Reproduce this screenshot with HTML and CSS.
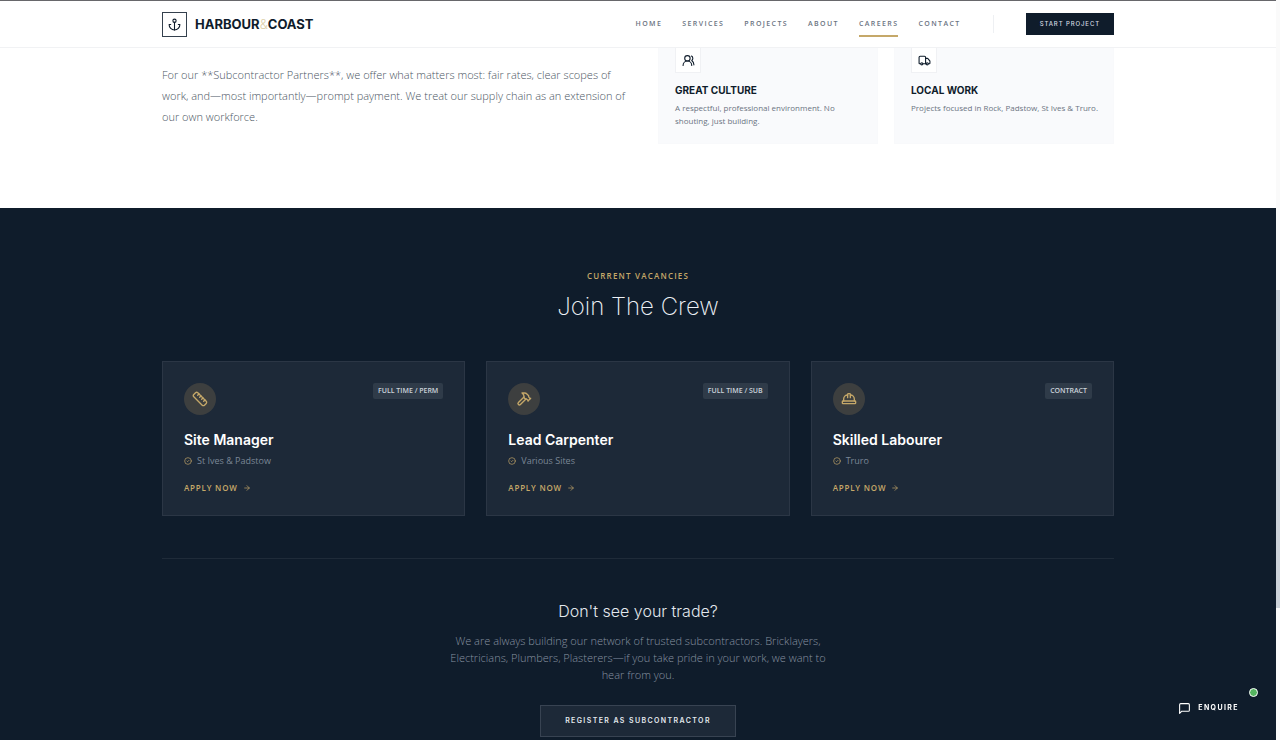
FILE: index.html
```html
<!DOCTYPE html>
<html lang="en">
<head>
<meta charset="utf-8">
<meta name="viewport" content="width=device-width, initial-scale=1">
<title>Careers | Harbour&amp;Coast</title>
<link rel="stylesheet" href="styles.css">
</head>
<body>
<svg class="sprite" aria-hidden="true">
  <symbol id="pin" viewBox="0 0 24 24"><circle cx="12" cy="12" r="10"/><path d="m9 12 2 2 4-4"/></symbol>
  <symbol id="arrow" viewBox="0 0 24 24"><path d="M5 12h14"/><path d="m12 5 7 7-7 7"/></symbol>
</svg>

<header class="site-header">
  <div class="container header-row">
    <a class="brand" href="#">
      <span class="brand-mark"><svg class="icon icon-md" viewBox="0 0 24 24"><path d="M12 22V8"/><path d="M5 12H2a10 10 0 0 0 20 0h-3"/><circle cx="12" cy="5" r="3"/></svg></span>
      <span class="brand-name">HARBOUR<span class="amp">&amp;</span>COAST</span>
    </a>
    <div class="header-right">
      <nav class="nav" aria-label="Main">
        <a href="#">HOME</a>
        <a href="#">SERVICES</a>
        <a href="#">PROJECTS</a>
        <a href="#">ABOUT</a>
        <a class="active" href="#" aria-current="page">CAREERS</a>
        <a href="#">CONTACT</a>
      </nav>
      <span class="divider"></span>
      <a class="start" href="#">START PROJECT</a>
    </div>
  </div>
</header>

<main class="page">
  <section class="intro">
    <div class="container intro-grid">
      <p class="intro-text">For our **Subcontractor Partners**, we offer what matters most: fair rates, clear scopes of work, and—most importantly—prompt payment. We treat our supply chain as an extension of our own workforce.</p>
      <div class="perks">
        <article class="perk">
          <span class="perk-icon"><svg class="icon icon-md" viewBox="0 0 24 24"><path d="M18 21a8 8 0 0 0-16 0"/><circle cx="10" cy="8" r="5"/><path d="M22 20c0-3.370-2-6.500-4-8a5 5 0 0 0-.45-8.300"/></svg></span>
          <h3>GREAT CULTURE</h3>
          <p>A respectful, professional environment. No shouting, just building.</p>
        </article>
        <article class="perk">
          <span class="perk-icon"><svg class="icon icon-md" viewBox="0 0 24 24"><path d="M14 18V6a2 2 0 0 0-2-2H4a2 2 0 0 0-2 2v11a1 1 0 0 0 1 1h2"/><path d="M15 18H9"/><path d="M19 18h2a1 1 0 0 0 1-1v-3.650a1 1 0 0 0-.22-.624l-3.480-4.350A1 1 0 0 0 17.520 8H14"/><circle cx="17" cy="18" r="2"/><circle cx="7" cy="18" r="2"/></svg></span>
          <h3>LOCAL WORK</h3>
          <p>Projects focused in Rock, Padstow, St Ives &amp; Truro.</p>
        </article>
      </div>
    </div>
  </section>

  <section class="vacancies">
    <div class="container">
      <p class="eyebrow">CURRENT VACANCIES</p>
      <h2>Join The Crew</h2>
      <div class="jobs">
        <article class="job">
          <div class="job-top">
            <span class="job-icon"><svg class="icon icon-lg" viewBox="0 0 24 24"><path d="M21.300 15.300a2.400 2.400 0 0 1 0 3.400l-2.600 2.600a2.400 2.400 0 0 1-3.400 0L2.700 8.700a2.410 2.410 0 0 1 0-3.400l2.600-2.600a2.410 2.410 0 0 1 3.400 0Z"/><path d="m14.500 12.500 2-2"/><path d="m11.500 9.500 2-2"/><path d="m8.500 6.500 2-2"/><path d="m17.500 15.500 2-2"/></svg></span>
            <span class="tag">FULL TIME / PERM</span>
          </div>
          <h3>Site Manager</h3>
          <p class="place"><svg class="icon icon-xs"><use href="#pin"/></svg>St Ives &amp; Padstow</p>
          <a class="apply" href="#">APPLY NOW<svg class="icon icon-xs"><use href="#arrow"/></svg></a>
        </article>
        <article class="job">
          <div class="job-top">
            <span class="job-icon"><svg class="icon icon-lg" viewBox="0 0 24 24"><path d="m15 12-8.373 8.373a1 1 0 1 1-3-3L12 9"/><path d="m18 15 4-4"/><path d="m21.500 11.500-1.914-1.914A2 2 0 0 1 19 8.172V7l-2.260-2.260a6 6 0 0 0-4.202-1.756L9 2.960l.92.820A6.180 6.180 0 0 1 12 8.400V10l2 2h1.172a2 2 0 0 1 1.414.586L18.500 14.500"/></svg></span>
            <span class="tag">FULL TIME / SUB</span>
          </div>
          <h3>Lead Carpenter</h3>
          <p class="place"><svg class="icon icon-xs"><use href="#pin"/></svg>Various Sites</p>
          <a class="apply" href="#">APPLY NOW<svg class="icon icon-xs"><use href="#arrow"/></svg></a>
        </article>
        <article class="job">
          <div class="job-top">
            <span class="job-icon"><svg class="icon icon-lg" viewBox="0 0 24 24"><path d="M2 18a1 1 0 0 0 1 1h18a1 1 0 0 0 1-1v-2a1 1 0 0 0-1-1H3a1 1 0 0 0-1 1v2z"/><path d="M10 10V5a1 1 0 0 1 1-1h2a1 1 0 0 1 1 1v5"/><path d="M4 15v-3a6 6 0 0 1 6-6"/><path d="M14 6a6 6 0 0 1 6 6v3"/></svg></span>
            <span class="tag">CONTRACT</span>
          </div>
          <h3>Skilled Labourer</h3>
          <p class="place"><svg class="icon icon-xs"><use href="#pin"/></svg>Truro</p>
          <a class="apply" href="#">APPLY NOW<svg class="icon icon-xs"><use href="#arrow"/></svg></a>
        </article>
      </div>
      <div class="trade">
        <h3>Don't see your trade?</h3>
        <p>We are always building our network of trusted subcontractors. Bricklayers, Electricians, Plumbers, Plasterers—if you take pride in your work, we want to hear from you.</p>
        <a class="register" href="#">REGISTER AS SUBCONTRACTOR</a>
      </div>
    </div>
  </section>
</main>

<button class="enquire" type="button">
  <svg class="icon icon-md" viewBox="0 0 24 24"><path d="M21 15a2 2 0 0 1-2 2H7l-4 4V5a2 2 0 0 1 2-2h14a2 2 0 0 1 2 2z"/></svg>
  ENQUIRE
  <span class="online"></span>
</button>
<div class="scroll-track" aria-hidden="true"><div class="scroll-thumb"></div></div>
</body>
</html>
```

FILE: styles.css
```css
:root {
  --navy: #0f1c2b;
  --panel: #1d2938;
  --gold: #c5a869;
  --head: Inter, "Open Sans", sans-serif;
  --text: "Open Sans", "Noto Sans", sans-serif;
}

* { box-sizing: border-box; margin: 0; padding: 0; }

body {
  min-height: 100vh;
  padding-right: 4px;
  background: #fff;
  color: var(--navy);
  font-family: var(--text);
  display: flex;
  flex-direction: column;
}

a { color: inherit; text-decoration: none; }

.sprite { position: absolute; width: 0; height: 0; }

.icon {
  flex: none;
  fill: none;
  stroke: currentColor;
  stroke-width: 2;
  stroke-linecap: round;
  stroke-linejoin: round;
}
.icon-xs { width: 8px; height: 8px; }
.icon-md { width: 13px; height: 13px; }
.icon-lg { width: 16px; height: 16px; }

.container { width: 100%; max-width: 952px; margin: 0 auto; }

/* Header */
.site-header {
  position: fixed;
  inset: 0 4px auto 0;
  z-index: 2;
  height: 48px;
  background: #fff;
  border-top: 1px solid #67676b;
  border-bottom: 1px solid #f1f2f4;
}
.header-row {
  height: 100%;
  display: flex;
  align-items: center;
  justify-content: space-between;
}
.brand { display: flex; align-items: center; gap: 8px; }
.brand-mark {
  width: 25px;
  height: 25px;
  border: 1px solid #34404d;
  display: grid;
  place-items: center;
}
.brand-name { font: 700 13px/16px var(--head); }
.amp { color: #ddd0a8; font-weight: 300; }
.header-right { display: flex; align-items: center; }
.nav { display: flex; gap: 20px; }
.nav a {
  padding: 6px 0 4px;
  border-bottom: 2px solid transparent;
  font-size: 7px;
  line-height: 14px;
  font-weight: 600;
  letter-spacing: 0.2em;
  color: #6b7482;
}
.nav .active { border-color: var(--gold); }
.divider { width: 1px; height: 18px; margin: 0 32px; background: #eef0f3; }
.start {
  padding: 0 14px;
  background: var(--navy);
  color: #d5dae0;
  font: 500 6px/22px var(--head);
  letter-spacing: 0.15em;
}

/* Intro */
.intro { padding: 29px 0 64px; }
.intro-grid {
  display: grid;
  grid-template-columns: 470fr 456fr;
  gap: 26px;
}
.intro-text {
  padding-top: 35px;
  font-size: 11px;
  line-height: 21px;
  font-weight: 300;
  color: #4b5563;
}
.perks { display: grid; grid-template-columns: 1fr 1fr; gap: 16px; }
.perk {
  padding: 17px 12px 16px 16px;
  background: #f9fafc;
  border: 1px solid #f8f9fb;
}
.perk-icon {
  width: 26px;
  height: 26px;
  background: #fff;
  border: 1px solid #f0f1f4;
  display: grid;
  place-items: center;
}
.perk h3 { margin-top: 10px; font: 700 10px/14px var(--head); }
.perk p {
  margin-top: 4px;
  font-size: 8px;
  line-height: 13px;
  color: #6b7482;
}

/* Vacancies */
.page { flex: 1; display: flex; flex-direction: column; }
.vacancies { flex: 1; padding: 61px 0 3px; background: var(--navy); }
.eyebrow {
  text-align: center;
  font-size: 8px;
  line-height: 14px;
  font-weight: 600;
  letter-spacing: 0.15em;
  color: var(--gold);
}
.vacancies h2 {
  margin-top: 8px;
  text-align: center;
  font: 200 24px/32px var(--head);
  color: #eef2f7;
}
.jobs {
  margin-top: 38px;
  display: grid;
  grid-template-columns: repeat(3, 1fr);
  gap: 21px;
}
.job {
  padding: 21px 21px 20px;
  background: var(--panel);
  border: 1px solid #2b3645;
}
.job-top { display: flex; align-items: flex-start; justify-content: space-between; }
.job-icon {
  width: 32px;
  height: 32px;
  border-radius: 50%;
  background: #3d3f3f;
  color: var(--gold);
  display: grid;
  place-items: center;
}
.tag {
  padding: 0 5px;
  border-radius: 2px;
  background: #2f3b49;
  color: #cbd2da;
  font-size: 7px;
  line-height: 16px;
  font-weight: 600;
}
.job h3 { margin-top: 16px; font: 600 14px/18px var(--head); color: #fff; }
.place {
  margin-top: 4px;
  display: flex;
  align-items: center;
  gap: 5px;
  font-size: 9px;
  line-height: 15px;
  color: #7b8796;
}
.place .icon { color: var(--gold); }
.apply {
  margin-top: 13px;
  display: flex;
  align-items: center;
  gap: 5px;
  font-size: 8px;
  line-height: 14px;
  font-weight: 600;
  letter-spacing: 0.1em;
  color: var(--gold);
}

.trade {
  margin-top: 42px;
  padding-top: 40px;
  border-top: 1px solid #1f2b39;
  text-align: center;
}
.trade h3 { font: 300 16px/24px var(--head); color: #e3e8ee; }
.trade p {
  max-width: 378px;
  margin: 9px auto 22px;
  font-size: 11px;
  line-height: 17px;
  font-weight: 300;
  color: #8792a0;
}
.register {
  display: inline-block;
  vertical-align: top;
  padding: 0 24px;
  background: var(--panel);
  border: 1px solid #384352;
  color: #e3e8ee;
  font: 600 7px/30px var(--head);
  letter-spacing: 0.2em;
}

/* Floating enquiry button */
.enquire {
  position: fixed;
  right: 26px;
  bottom: 16px;
  z-index: 3;
  display: flex;
  align-items: center;
  gap: 7px;
  padding: 0 15px 0 11px;
  background: var(--navy);
  border: 0;
  color: #fff;
  font: 700 7px/32px var(--head);
  letter-spacing: 0.2em;
}
.online {
  position: absolute;
  top: -4px;
  right: -4px;
  width: 9px;
  height: 9px;
  border: 1px solid #fff;
  border-radius: 50%;
  background: #55b560;
}

.scroll-track {
  position: fixed;
  inset: 0 0 0 auto;
  width: 4px;
  background: #fafafa;
}
.scroll-thumb { height: 43%; margin-top: 290px; background: #cdd3da; }
```
